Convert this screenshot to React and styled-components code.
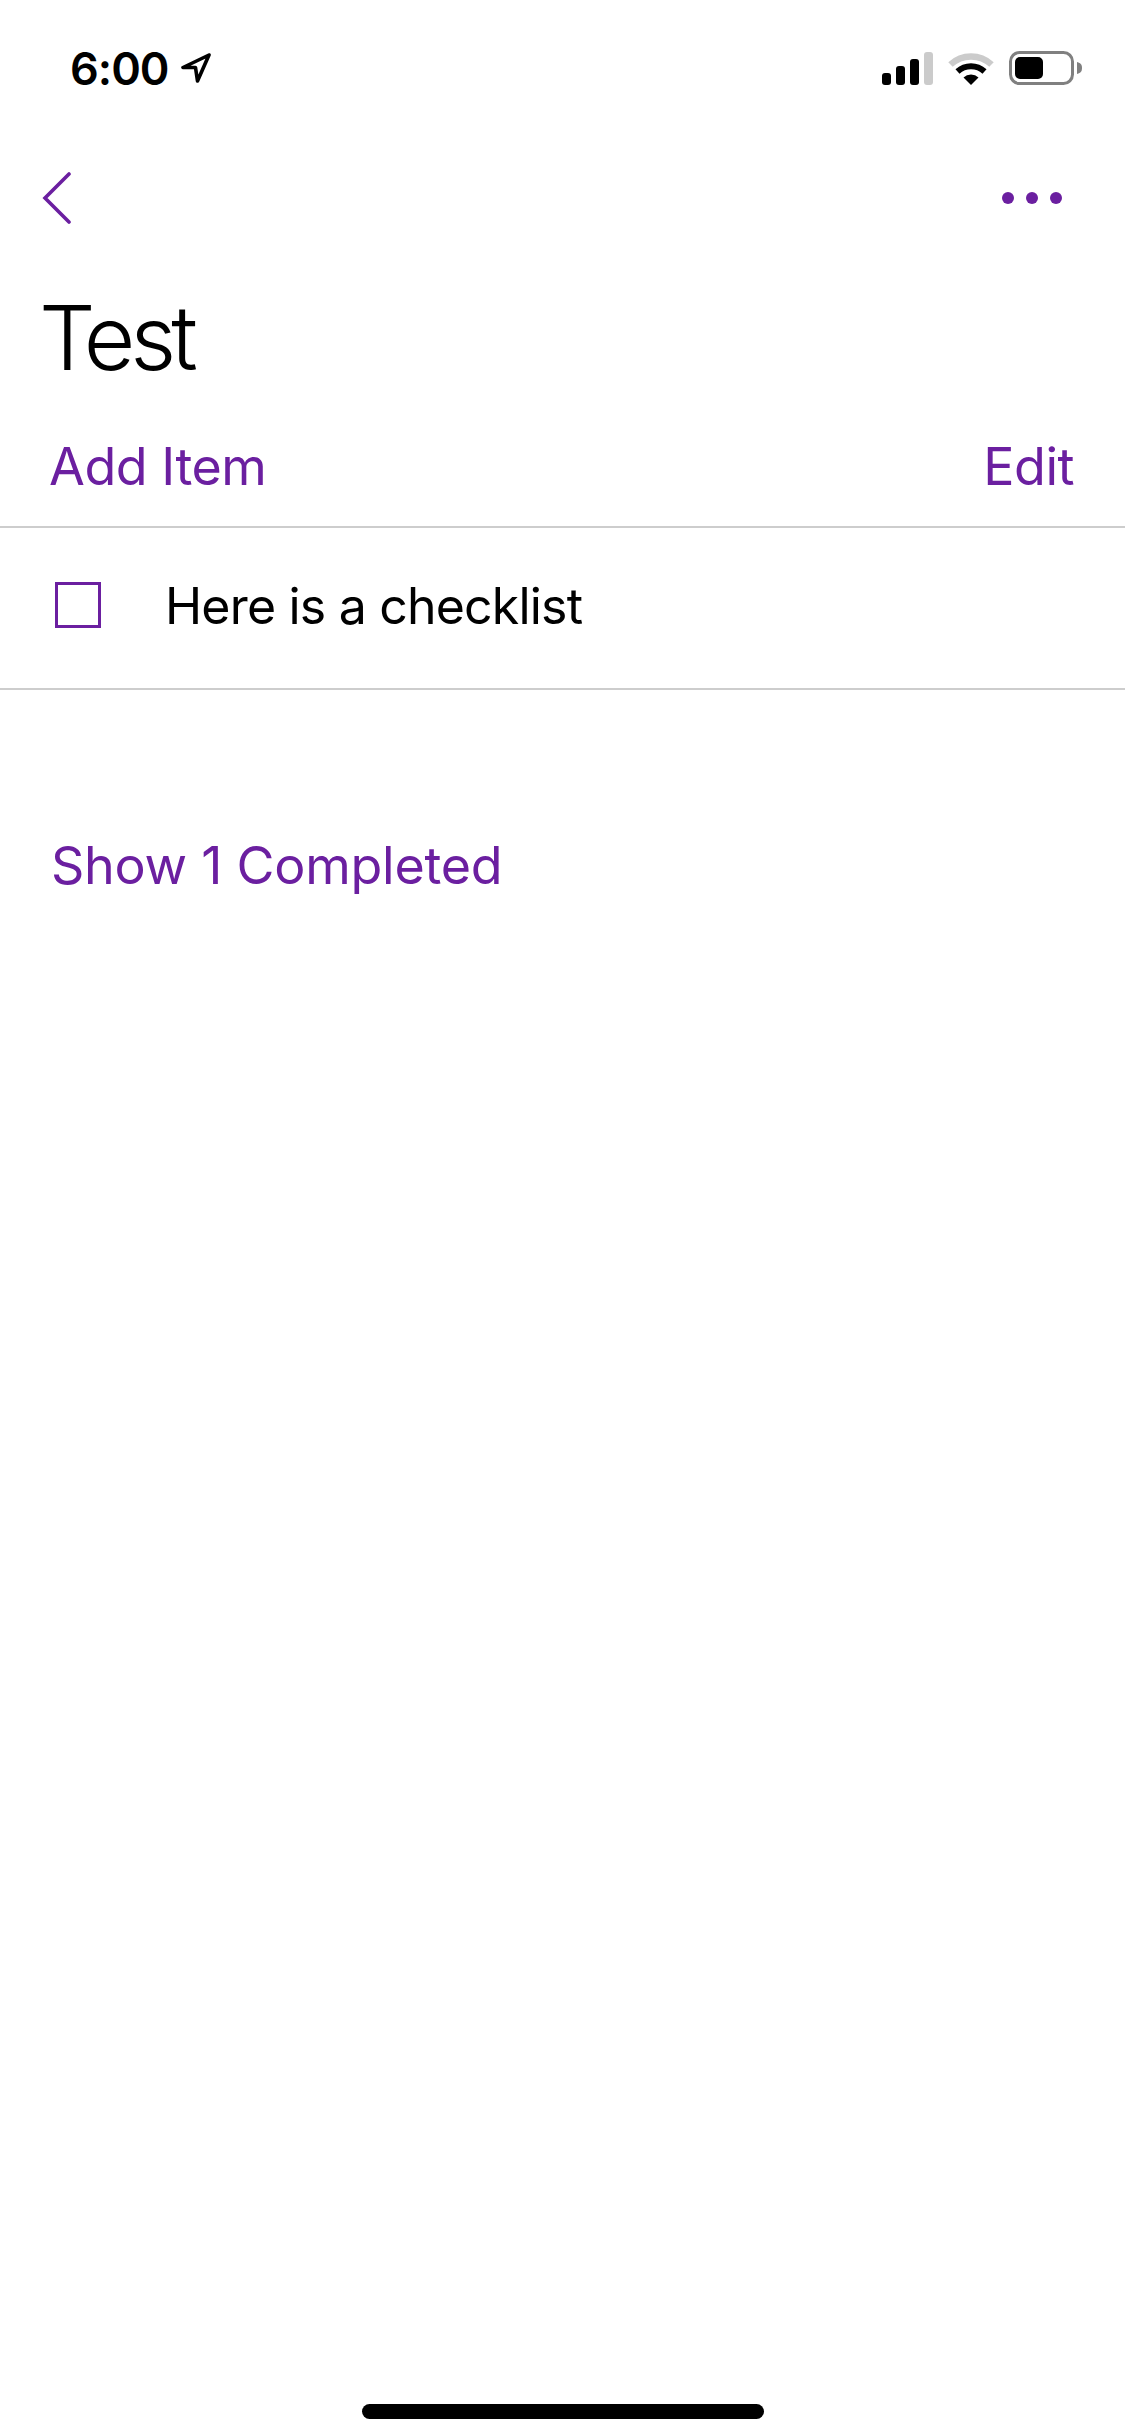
import React from "react";
import styled, { createGlobalStyle } from "styled-components";

const purple = "#6b1fa0";
const Global = createGlobalStyle`
  html, body { margin: 0; padding: 0; background: #fff; }
  body { font-family: "Inter", "Liberation Sans", sans-serif; }
`;
const Page = styled.div`
  width: 1125px; height: 2436px; background: #fff; display: flex; flex-direction: column; overflow: hidden;
`;
const StatusBar = styled.div`
  height: 132px; box-sizing: border-box; padding: 4px 42px 0 70px; display: flex; align-items: center; justify-content: space-between;
`;
const Time = styled.div`
  display: flex; align-items: center; gap: 12px; font: 600 45px/1 "Inter", sans-serif; color: #000; letter-spacing: -1px;
`;
const Status = styled.div`display: flex; align-items: center; gap: 15px;`;
const Nav = styled.div`
  height: 132px; box-sizing: border-box; padding: 0 63px 0 42px; display: flex; align-items: center; justify-content: space-between;
`;
const Title = styled.h1`
  margin: 0; height: 142px; box-sizing: border-box; padding: 5px 0 0 39px; font: 300 89px/137px "Inter", sans-serif; color: #000; letter-spacing: -5px;
`;
const Actions = styled.div`
  height: 122px; box-sizing: border-box; padding: 2px 51px 0 49px; display: flex; align-items: center; justify-content: space-between;
  border-bottom: 2px solid #cdcdcd; font: 400 52px/1 "Inter", sans-serif; color: ${purple}; letter-spacing: -0.5px;
`;
const Row = styled.div`
  height: 162px; box-sizing: border-box; padding: 0 0 4px 55px; display: flex; align-items: center; gap: 64px;
  border-bottom: 2px solid #cdcdcd; font: 400 50px/1 "Inter", sans-serif; color: #000; letter-spacing: -0.8px;
`;
const Check = styled.div`width: 46px; height: 46px; box-sizing: border-box; border: 3px solid ${purple}; margin-top: -2px;`;
const Completed = styled.div`
  padding: 149px 0 0 51px; font: 400 52px/54px "Inter", sans-serif; color: ${purple}; letter-spacing: -0.25px;
`;
const Spacer = styled.div`flex: 1;`;
const HomeBar = styled.div`
  width: 402px; height: 15px; border-radius: 8px; background: #000; align-self: center; margin-bottom: 17px;
`;

export default function App() {
  return (
    <Page>
      <Global />
      <StatusBar>
        <Time>6:00
          <svg width="30" height="30" viewBox="0 0 30 30"><path d="M28 2 2 14.5h12.5L16.5 28z" fill="none" stroke="#000" strokeWidth="3.6" strokeLinejoin="round"/></svg>
        </Time>
        <Status>
          <svg width="51" height="33" viewBox="0 0 51 33">
            <rect x="0" y="21" width="9" height="12" rx="3" fill="#000"/>
            <rect x="14" y="14" width="9" height="19" rx="3" fill="#000"/>
            <rect x="28" y="7" width="9" height="26" rx="3" fill="#000"/>
            <rect x="42" y="0" width="9" height="33" rx="3" fill="#cbcbcb"/>
          </svg>
          <svg width="46" height="34" viewBox="0 0 46 34">
            <path d="M2.5 13.5a30 30 0 0 1 41 0" fill="none" stroke="#cbcbcb" strokeWidth="6.5"/>
            <path d="M9.5 20.5a20 20 0 0 1 27 0" fill="none" stroke="#000" strokeWidth="6"/>
            <path d="M15.5 26.5 23 34l7.5-7.5a11 11 0 0 0-15 0z" fill="#000"/>
          </svg>
          <svg width="74" height="34" viewBox="0 0 74 34">
            <rect x="1.5" y="1.5" width="62" height="31" rx="9" fill="none" stroke="#808080" strokeWidth="3"/>
            <rect x="6" y="6" width="28" height="22" rx="5" fill="#000"/>
            <path d="M68 11c4 1 5 3 5 6s-1 5-5 6z" fill="#808080"/>
          </svg>
        </Status>
      </StatusBar>
      <Nav>
        <svg width="29" height="52" viewBox="0 0 29 52"><path d="M27 2 3 26l24 24" fill="none" stroke={purple} strokeWidth="3.6" strokeLinecap="round"/></svg>
        <svg width="60" height="12" viewBox="0 0 60 12" fill={purple}><circle cx="6" cy="6" r="6"/><circle cx="30" cy="6" r="6"/><circle cx="54" cy="6" r="6"/></svg>
      </Nav>
      <Title>Test</Title>
      <Actions><span>Add Item</span><span>Edit</span></Actions>
      <Row><Check /><span>Here is a checklist</span></Row>
      <Completed>Show 1 Completed</Completed>
      <Spacer />
      <HomeBar />
    </Page>
  );
}
